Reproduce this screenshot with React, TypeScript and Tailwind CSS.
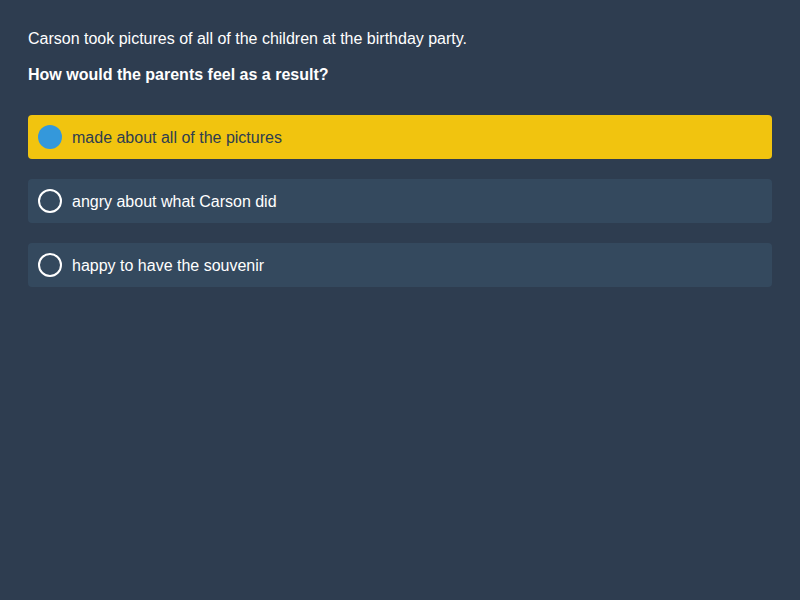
const options = [
  { label: 'made about all of the pictures', selected: true },
  { label: 'angry about what Carson did', selected: false },
  { label: 'happy to have the souvenir', selected: false },
];

export default function App() {
  return (
    <div className="min-h-[600px] w-full bg-[#2e3d50] px-[28px] pt-[28px] font-['Liberation_Sans',Arial,sans-serif] text-white">
      <p className="text-[16px] leading-[22px]">Carson took pictures of all of the children at the birthday party.</p>
      <p className="mt-[14px] text-[16px] font-bold leading-[22px]">How would the parents feel as a result?</p>
      <div className="mt-[29px] flex flex-col gap-[20px]">
        {options.map((o) => (
          <div
            key={o.label}
            className={`flex h-[44px] items-center gap-[10px] rounded-[4px] px-[10px] ${
              o.selected ? 'bg-[#f1c40f] text-[#2e3d50]' : 'bg-[#34495e] text-white'
            }`}
          >
            {o.selected ? (
              <span className="h-[24px] w-[24px] rounded-full bg-[#3498db]" />
            ) : (
              <span className="h-[24px] w-[24px] rounded-full border-2 border-white" />
            )}
            <span className="mt-[2px] text-[16px]">{o.label}</span>
          </div>
        ))}
      </div>
    </div>
  );
}
